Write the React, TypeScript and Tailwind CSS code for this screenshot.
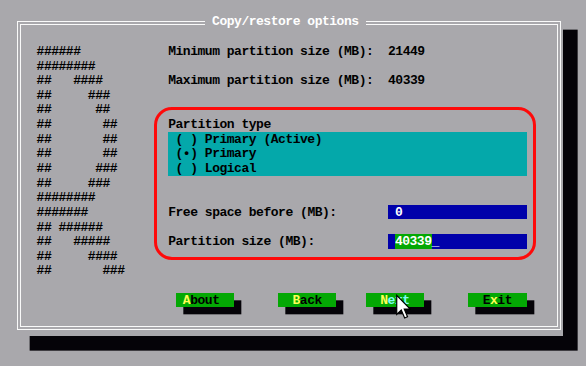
import React from 'react';

const hashArt = [
  '######',
  '########',
  '##   ####',
  '##     ###',
  '##      ##',
  '##       ##',
  '##       ##',
  '##       ##',
  '##      ###',
  '##     ###',
  '########',
  '#######',
  '## ######',
  '##   #####',
  '##     ####',
  '##       ###',
].join('\n');

function Hot({ children }: { children: React.ReactNode }) {
  return <span className="text-[#ffff55]">{children}</span>;
}

export default function App() {
  return (
    <div className="relative w-[586px] h-[366px] overflow-hidden bg-[#a9a8ac] font-['Liberation_Mono',monospace] font-bold text-[13px] tracking-[-0.475px] leading-[14.64px] text-black">
      <div className="grid grid-cols-[repeat(80,7.325px)] grid-rows-[repeat(25,14.64px)]">
        {/* dialog window with double frame + shadow */}
        <div className="col-[3/78] row-[2/24] flex bg-[#a9a8ac] pt-[6px] pb-[6px] px-[2px] shadow-[14.65px_14.64px_0_#050308]">
          <div className="flex flex-1 border border-[#fafafa] p-[2px]">
            <div className="flex-1 border border-[#fafafa]" />
          </div>
        </div>
        <div className="col-[29/51] row-[2] bg-[#a9a8ac] text-white whitespace-pre">
          {' Copy/restore options '}
        </div>

        <div className="col-[6/20] row-[4/20] whitespace-pre pt-px">{hashArt}</div>

        <div className="col-[24/72] row-[4] whitespace-pre pt-px">Minimum partition size (MB):  21449</div>
        <div className="col-[24/72] row-[6] whitespace-pre pt-px">Maximum partition size (MB):  40339</div>

        <div className="col-[24/50] row-[9] whitespace-pre pt-px">Partition type</div>
        <div className="col-[24/73] row-[10/13] flex flex-col bg-[#04a8aa] pl-[7.325px] whitespace-pre">
          <div className="h-[14.64px] pt-px">( ) Primary (Active)</div>
          <div className="h-[14.64px] pt-px">(•) Primary</div>
          <div className="h-[14.64px] pt-px">( ) Logical</div>
        </div>

        <div className="col-[24/50] row-[15] whitespace-pre pt-px">Free space before (MB):</div>
        <div className="col-[54/73] row-[15] bg-[#0000aa] pl-[7.325px] pt-px text-white">0</div>

        <div className="col-[24/50] row-[17] whitespace-pre pt-px">Partition size (MB):</div>
        <div className="col-[54/73] row-[17] flex bg-[#0000aa] pl-[7.325px] text-white">
          <span className="bg-[#04a804] pt-px">40339</span>
          <span className="pt-px">_</span>
        </div>

        {/* buttons */}
        <div className="col-[25/33] row-[21] bg-[#04a804] whitespace-pre pt-px shadow-[7.325px_7.32px_0_#050308]">
          {' '}<Hot>A</Hot>bout
        </div>
        <div className="col-[39/47] row-[21] bg-[#04a804] whitespace-pre pt-px shadow-[7.325px_7.32px_0_#050308]">
          {'  '}<Hot>B</Hot>ack
        </div>
        <div className="col-[51/59] row-[21] bg-[#04a804] whitespace-pre pt-px text-[#80fcf8] shadow-[7.325px_7.32px_0_#050308]">
          {'  '}<Hot>N</Hot>ext
        </div>
        <div className="col-[65/73] row-[21] bg-[#04a804] whitespace-pre pt-px shadow-[7.325px_7.32px_0_#050308]">
          {'  '}E<Hot>x</Hot>it
        </div>
      </div>

      {/* red annotation ring */}
      <div className="absolute left-[154px] top-[107px] w-[382px] h-[153px] rounded-[18px] border-[3px] border-[#fe0a0a]" />

      {/* mouse pointer */}
      <svg className="absolute left-[396px] top-[294px]" width="15" height="26" viewBox="0 0 12.5 20.5">
        <path
          d="M0.6 0.6 L0.6 16.4 L4.4 12.8 L7.2 19.4 L9.6 18.4 L6.9 12 L11.8 12 Z"
          fill="#ffffff"
          stroke="#000000"
          strokeWidth="1"
          strokeLinejoin="miter"
        />
      </svg>
    </div>
  );
}
